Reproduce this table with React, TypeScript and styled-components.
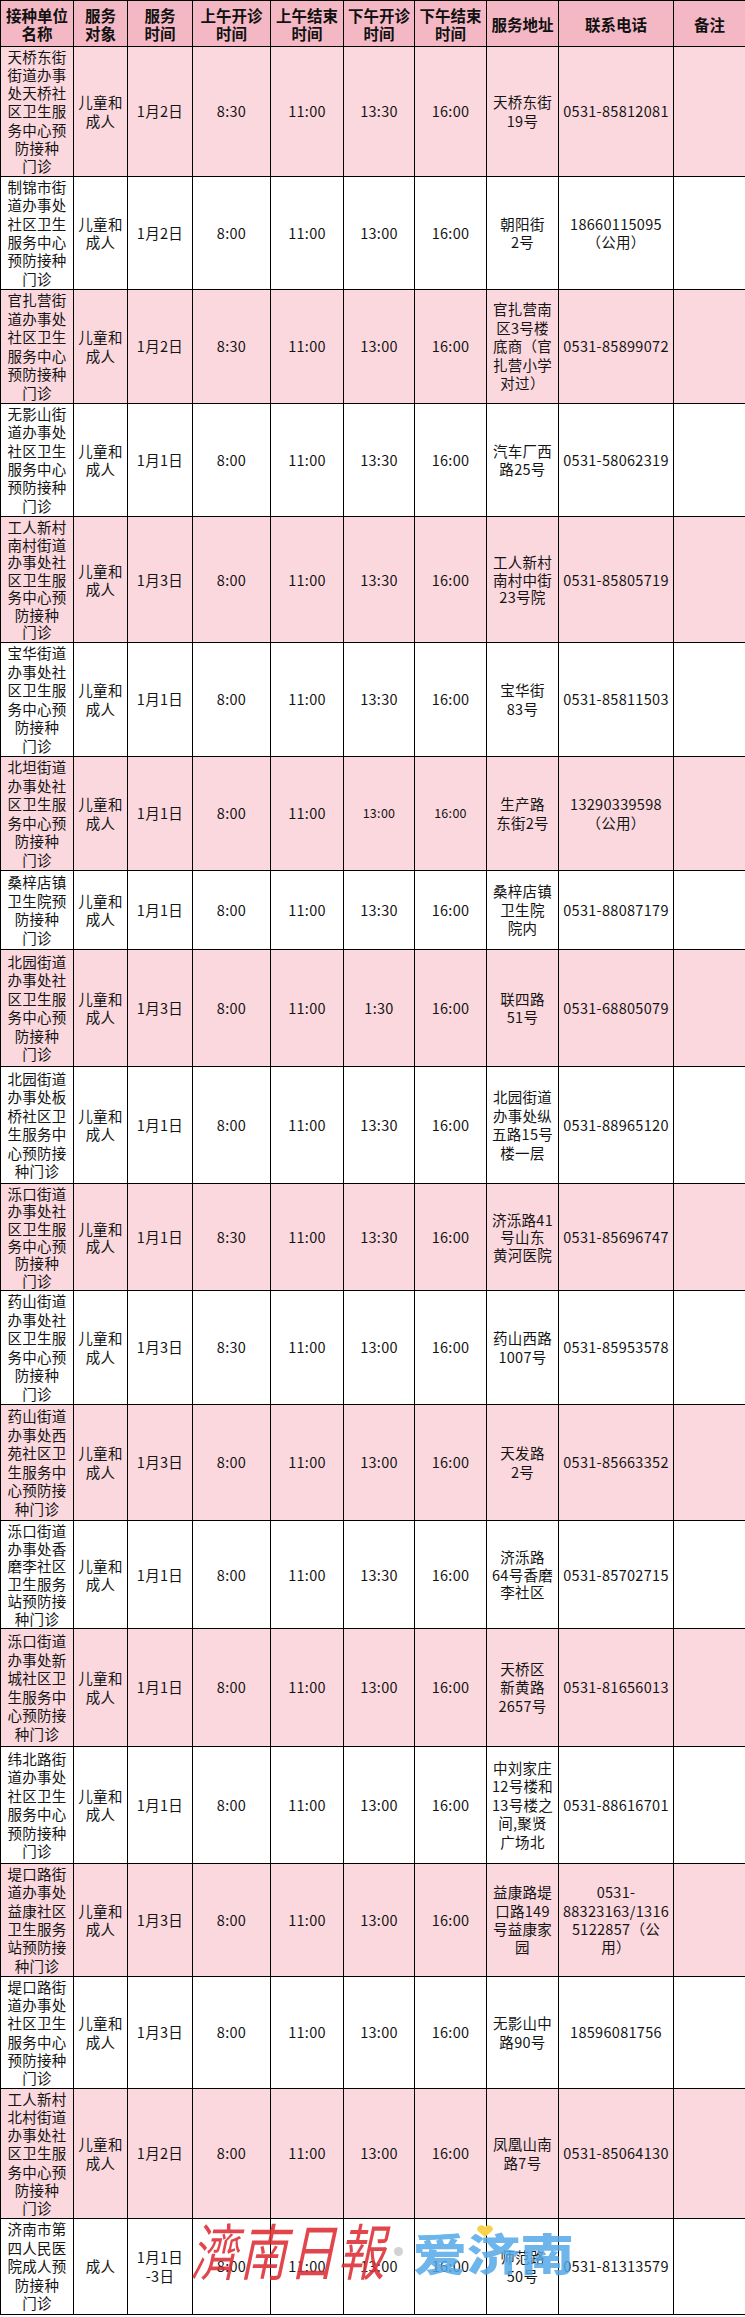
import React from "react";
import styled, { createGlobalStyle } from "styled-components";

const GlobalStyle = createGlobalStyle`
  html, body {
    margin: 0;
    padding: 0;
    background: #fff;
  }
  body {
    font-family: "Noto Sans CJK SC", "Noto Sans", sans-serif;
    color: #141414;
  }
`;

interface Site {
  name: string[];
  who: string[];
  day: string[];
  amStart: string;
  amEnd: string;
  pmStart: string;
  pmEnd: string;
  addr: string[];
  phone: string[];
  h: number;
  thin?: boolean;
}

const widths = [73, 54, 65, 78, 73, 71, 72, 72, 115, 72];

const heads: string[][] = [
  ["接种单位", "名称"],
  ["服务", "对象"],
  ["服务", "时间"],
  ["上午开诊", "时间"],
  ["上午结束", "时间"],
  ["下午开诊", "时间"],
  ["下午结束", "时间"],
  ["服务地址"],
  ["联系电话"],
  ["备注"]
];

const both = ["儿童和", "成人"];

const sites: Site[] = [
  { name: ["天桥东街", "街道办事", "处天桥社", "区卫生服", "务中心预", "防接种", "门诊"], who: both, day: ["1月2日"], amStart: "8:30", amEnd: "11:00", pmStart: "13:30", pmEnd: "16:00", addr: ["天桥东街", "19号"], phone: ["0531-85812081"], h: 130 },
  { name: ["制锦市街", "道办事处", "社区卫生", "服务中心", "预防接种", "门诊"], who: both, day: ["1月2日"], amStart: "8:00", amEnd: "11:00", pmStart: "13:00", pmEnd: "16:00", addr: ["朝阳街", "2号"], phone: ["18660115095", "（公用）"], h: 113 },
  { name: ["官扎营街", "道办事处", "社区卫生", "服务中心", "预防接种", "门诊"], who: both, day: ["1月2日"], amStart: "8:30", amEnd: "11:00", pmStart: "13:00", pmEnd: "16:00", addr: ["官扎营南", "区3号楼", "底商（官", "扎营小学", "对过）"], phone: ["0531-85899072"], h: 114 },
  { name: ["无影山街", "道办事处", "社区卫生", "服务中心", "预防接种", "门诊"], who: both, day: ["1月1日"], amStart: "8:00", amEnd: "11:00", pmStart: "13:30", pmEnd: "16:00", addr: ["汽车厂西", "路25号"], phone: ["0531-58062319"], h: 113 },
  { name: ["工人新村", "南村街道", "办事处社", "区卫生服", "务中心预", "防接种", "门诊"], who: both, day: ["1月3日"], amStart: "8:00", amEnd: "11:00", pmStart: "13:30", pmEnd: "16:00", addr: ["工人新村", "南村中街", "23号院"], phone: ["0531-85805719"], h: 126 },
  { name: ["宝华街道", "办事处社", "区卫生服", "务中心预", "防接种", "门诊"], who: both, day: ["1月1日"], amStart: "8:00", amEnd: "11:00", pmStart: "13:30", pmEnd: "16:00", addr: ["宝华街", "83号"], phone: ["0531-85811503"], h: 114 },
  { name: ["北坦街道", "办事处社", "区卫生服", "务中心预", "防接种", "门诊"], who: both, day: ["1月1日"], amStart: "8:00", amEnd: "11:00", pmStart: "13:00", pmEnd: "16:00", addr: ["生产路", "东街2号"], phone: ["13290339598", "（公用）"], h: 114, thin: true },
  { name: ["桑梓店镇", "卫生院预", "防接种", "门诊"], who: both, day: ["1月1日"], amStart: "8:00", amEnd: "11:00", pmStart: "13:30", pmEnd: "16:00", addr: ["桑梓店镇", "卫生院", "院内"], phone: ["0531-88087179"], h: 79 },
  { name: ["北园街道", "办事处社", "区卫生服", "务中心预", "防接种", "门诊"], who: both, day: ["1月3日"], amStart: "8:00", amEnd: "11:00", pmStart: "1:30", pmEnd: "16:00", addr: ["联四路", "51号"], phone: ["0531-68805079"], h: 117 },
  { name: ["北园街道", "办事处板", "桥社区卫", "生服务中", "心预防接", "种门诊"], who: both, day: ["1月1日"], amStart: "8:00", amEnd: "11:00", pmStart: "13:30", pmEnd: "16:00", addr: ["北园街道", "办事处纵", "五路15号", "楼一层"], phone: ["0531-88965120"], h: 117 },
  { name: ["泺口街道", "办事处社", "区卫生服", "务中心预", "防接种", "门诊"], who: both, day: ["1月1日"], amStart: "8:30", amEnd: "11:00", pmStart: "13:30", pmEnd: "16:00", addr: ["济泺路41", "号山东", "黄河医院"], phone: ["0531-85696747"], h: 107 },
  { name: ["药山街道", "办事处社", "区卫生服", "务中心预", "防接种", "门诊"], who: both, day: ["1月3日"], amStart: "8:30", amEnd: "11:00", pmStart: "13:00", pmEnd: "16:00", addr: ["药山西路", "1007号"], phone: ["0531-85953578"], h: 114 },
  { name: ["药山街道", "办事处西", "苑社区卫", "生服务中", "心预防接", "种门诊"], who: both, day: ["1月3日"], amStart: "8:00", amEnd: "11:00", pmStart: "13:00", pmEnd: "16:00", addr: ["天发路", "2号"], phone: ["0531-85663352"], h: 116 },
  { name: ["泺口街道", "办事处香", "磨李社区", "卫生服务", "站预防接", "种门诊"], who: both, day: ["1月1日"], amStart: "8:00", amEnd: "11:00", pmStart: "13:30", pmEnd: "16:00", addr: ["济泺路", "64号香磨", "李社区"], phone: ["0531-85702715"], h: 108 },
  { name: ["泺口街道", "办事处新", "城社区卫", "生服务中", "心预防接", "种门诊"], who: both, day: ["1月1日"], amStart: "8:00", amEnd: "11:00", pmStart: "13:00", pmEnd: "16:00", addr: ["天桥区", "新黄路", "2657号"], phone: ["0531-81656013"], h: 118 },
  { name: ["纬北路街", "道办事处", "社区卫生", "服务中心", "预防接种", "门诊"], who: both, day: ["1月1日"], amStart: "8:00", amEnd: "11:00", pmStart: "13:00", pmEnd: "16:00", addr: ["中刘家庄", "12号楼和", "13号楼之", "间,聚贤", "广场北"], phone: ["0531-88616701"], h: 117 },
  { name: ["堤口路街", "道办事处", "益康社区", "卫生服务", "站预防接", "种门诊"], who: both, day: ["1月3日"], amStart: "8:00", amEnd: "11:00", pmStart: "13:00", pmEnd: "16:00", addr: ["益康路堤", "口路149", "号益康家", "园"], phone: ["0531-", "88323163/1316", "5122857（公", "用）"], h: 113 },
  { name: ["堤口路街", "道办事处", "社区卫生", "服务中心", "预防接种", "门诊"], who: both, day: ["1月3日"], amStart: "8:00", amEnd: "11:00", pmStart: "13:00", pmEnd: "16:00", addr: ["无影山中", "路90号"], phone: ["18596081756"], h: 112 },
  { name: ["工人新村", "北村街道", "办事处社", "区卫生服", "务中心预", "防接种", "门诊"], who: both, day: ["1月2日"], amStart: "8:00", amEnd: "11:00", pmStart: "13:00", pmEnd: "16:00", addr: ["凤凰山南", "路7号"], phone: ["0531-85064130"], h: 130 },
  { name: ["济南市第", "四人民医", "院成人预", "防接种", "门诊"], who: ["成人"], day: ["1月1日", "-3日"], amStart: "8:00", amEnd: "11:00", pmStart: "13:00", pmEnd: "16:00", addr: ["师范路", "50号"], phone: ["0531-81313579"], h: 96 }
];

// line pitch so that the tallest cell of a row fits in the row's height
const pitch = (s: Site) => {
  const most = Math.max(s.name.length, s.addr.length, s.phone.length, 2);
  return Math.min(18.5, (s.h - 3) / most);
};

const Page = styled.div`
  position: relative;
  width: 745px;
  height: 2317px;
  overflow: hidden;
`;

const Table = styled.table`
  width: 745px;
  table-layout: fixed;
  border-collapse: collapse;
  font-size: 14.5px;
`;

const Row = styled.tr<{ $h: number; $pink: boolean; $lh: number }>`
  height: ${p => p.$h}px;
  line-height: ${p => p.$lh}px;
  background: ${p => (p.$pink ? "#fbd8de" : "#ffffff")};
`;

const HeadRow = styled.tr`
  height: 46px;
  background: #f4b8c5;
`;

const HeadCell = styled.th`
  border: 1px solid #000;
  padding: 0;
  text-align: center;
  vertical-align: middle;
  font-weight: 700;
  font-size: 15.5px;
  line-height: 18px;
  color: #111;
`;

const Cell = styled.td<{ $thin?: boolean }>`
  border: 1px solid #000;
  padding: 0;
  text-align: center;
  vertical-align: middle;
  font-size: ${p => (p.$thin ? "12.5px" : "14.5px")};
  letter-spacing: 0.3px;
`;

const Line = styled.span`
  display: block;
  white-space: nowrap;
`;

const Lines = ({ items }: { items: string[] }) => (
  <>
    {items.map((t, i) => (
      <Line key={i}>{t}</Line>
    ))}
  </>
);

const Watermark = styled.div`
  position: absolute;
  left: 196px;
  top: 2216px;
  display: flex;
  align-items: center;
  pointer-events: none;
`;

const PaperName = styled.span`
  font-family: "Noto Sans CJK TC", "Noto Sans CJK SC", sans-serif;
  font-weight: 400;
  font-size: 47px;
  line-height: 66px;
  letter-spacing: 2px;
  color: rgba(221, 44, 52, 0.88);
  transform: skewX(-12deg) scaleY(1.3);
  transform-origin: left center;
`;

const Dot = styled.span`
  width: 9px;
  height: 9px;
  border-radius: 50%;
  background: #d2d2d2;
  margin: 4px 10px 0 2px;
`;

const AppName = styled.span`
  position: relative;
  font-family: "Noto Sans CJK SC", sans-serif;
  font-weight: 900;
  font-size: 44px;
  line-height: 48px;
  color: rgba(84, 168, 232, 0.85);
  margin-top: 6px;
  transform: scaleX(1.22);
  transform-origin: left center;
`;

const Heart = styled.svg`
  position: absolute;
  left: 52px;
  top: -3px;
`;

export default function App() {
  return (
    <Page>
      <GlobalStyle />
      <Table>
        <colgroup>
          {widths.map((w, i) => (
            <col key={i} style={{ width: w }} />
          ))}
        </colgroup>
        <thead>
          <HeadRow>
            {heads.map((h, i) => (
              <HeadCell key={i}>
                <Lines items={h} />
              </HeadCell>
            ))}
          </HeadRow>
        </thead>
        <tbody>
          {sites.map((s, i) => (
            <Row key={i} $h={s.h} $lh={pitch(s)} $pink={i % 2 === 0}>
              <Cell><Lines items={s.name} /></Cell>
              <Cell><Lines items={s.who} /></Cell>
              <Cell><Lines items={s.day} /></Cell>
              <Cell>{s.amStart}</Cell>
              <Cell>{s.amEnd}</Cell>
              <Cell $thin={s.thin}>{s.pmStart}</Cell>
              <Cell $thin={s.thin}>{s.pmEnd}</Cell>
              <Cell><Lines items={s.addr} /></Cell>
              <Cell><Lines items={s.phone} /></Cell>
              <Cell />
            </Row>
          ))}
        </tbody>
      </Table>
      <Watermark>
        <PaperName>濟南日報</PaperName>
        <Dot />
        <AppName>
          爱济南
          <Heart width="14" height="12" viewBox="0 0 14 12">
            <path d="M7 12 L1.2 6 A3.3 3.3 0 0 1 7 2 A3.3 3.3 0 0 1 12.8 6 Z" fill="#f6d34a" />
          </Heart>
        </AppName>
      </Watermark>
    </Page>
  );
}
